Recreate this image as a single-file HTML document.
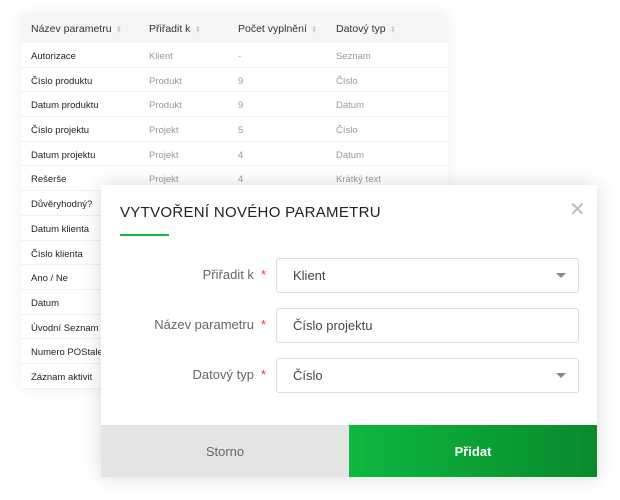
<!DOCTYPE html>
<html><head><meta charset="utf-8"><style>
*{margin:0;padding:0;box-sizing:border-box}
body{width:620px;height:500px;background:#fff;font-family:"Liberation Sans",sans-serif;position:relative;overflow:hidden}
.tbl{position:absolute;left:21px;top:14px;width:427px;height:375px;background:#fff;box-shadow:0 0 14px rgba(0,0,0,.07);border-radius:6px;overflow:hidden}
.hd{height:29px;background:#f5f5f7;position:relative;font-size:10.5px;color:#333}
.hd span,.r span{position:absolute;top:0}
.hd span{line-height:31px}
.s{color:#ccc;font-size:8px;margin-left:4px;font-style:normal}
.r{height:24.7px;line-height:28px;border-bottom:1px solid #f0f0f0;position:relative;font-size:9.5px;color:#222}
.r span{line-height:28px}
.r span.g{color:#999}
.c1{left:10px}.c2{left:128px}.c3{left:217px}.c4{left:315px}
.modal{position:absolute;left:101px;top:185px;width:496px;height:292px;background:#fff;box-shadow:0 0 18px rgba(0,0,0,.15)}
.title{position:absolute;left:19px;top:19px;font-size:15px;color:#222;letter-spacing:.3px}
.ul{position:absolute;left:19px;top:49px;width:49px;height:2px;background:#1ab24a}
.x{position:absolute;left:468px;top:15px;font-size:20px;color:#bbb;line-height:20px}
.lb{position:absolute;right:331px;font-size:13px;color:#666;text-align:right;white-space:nowrap}
.lb b{color:#e33;font-weight:normal;margin-left:7px}
.f{position:absolute;left:175px;width:303px;height:35px;border:1px solid #ddd;border-radius:3px;font-size:13px;color:#444;line-height:33px;padding-left:16px}
.tri{position:absolute;right:12px;top:14px;width:0;height:0;border-left:5px solid transparent;border-right:5px solid transparent;border-top:5px solid #888}
.b1{position:absolute;left:0;top:240px;width:248px;height:52px;background:#e4e4e4;color:#666;font-size:13px;text-align:center;line-height:54px}
.b2{position:absolute;left:248px;top:240px;width:248px;height:52px;background:linear-gradient(90deg,#0cb840,#0a8a2c);color:#fff;font-size:13px;text-align:center;line-height:54px;font-weight:bold}
</style></head><body>
<div class="tbl">
<div class="hd"><span class="c1">Název parametru<i class="s">⬍</i></span><span class="c2">Přiřadit k<i class="s">⬍</i></span><span class="c3">Počet vyplnění<i class="s">⬍</i></span><span class="c4">Datový typ<i class="s">⬍</i></span></div>
<div class="r"><span class="c1">Autorizace</span><span class="c2 g">Klient</span><span class="c3 g">-</span><span class="c4 g">Seznam</span></div>
<div class="r"><span class="c1">Číslo produktu</span><span class="c2 g">Produkt</span><span class="c3 g">9</span><span class="c4 g">Číslo</span></div>
<div class="r"><span class="c1">Datum produktu</span><span class="c2 g">Produkt</span><span class="c3 g">9</span><span class="c4 g">Datum</span></div>
<div class="r"><span class="c1">Číslo projektu</span><span class="c2 g">Projekt</span><span class="c3 g">5</span><span class="c4 g">Číslo</span></div>
<div class="r"><span class="c1">Datum projektu</span><span class="c2 g">Projekt</span><span class="c3 g">4</span><span class="c4 g">Datum</span></div>
<div class="r"><span class="c1">Rešerše</span><span class="c2 g">Projekt</span><span class="c3 g">4</span><span class="c4 g">Krátký text</span></div>
<div class="r"><span class="c1">Důvěryhodný?</span></div>
<div class="r"><span class="c1">Datum klienta</span></div>
<div class="r"><span class="c1">Číslo klienta</span></div>
<div class="r"><span class="c1">Ano / Ne</span></div>
<div class="r"><span class="c1">Datum</span></div>
<div class="r"><span class="c1">Úvodní Seznam</span></div>
<div class="r"><span class="c1">Numero POStale</span></div>
<div class="r"><span class="c1">Záznam aktivit</span></div>
</div>
<div class="modal">
<div class="title">VYTVOŘENÍ NOVÉHO PARAMETRU</div>
<div class="ul"></div>
<div class="x">✕</div>
<div class="lb" style="top:82px">Přiřadit k<b>*</b></div>
<div class="f" style="top:73px">Klient<div class="tri"></div></div>
<div class="lb" style="top:132px">Název parametru<b>*</b></div>
<div class="f" style="top:123px">Číslo projektu</div>
<div class="lb" style="top:182px">Datový typ<b>*</b></div>
<div class="f" style="top:173px">Číslo<div class="tri"></div></div>
<div class="b1">Storno</div>
<div class="b2">Přidat</div>
</div>
</body></html>
